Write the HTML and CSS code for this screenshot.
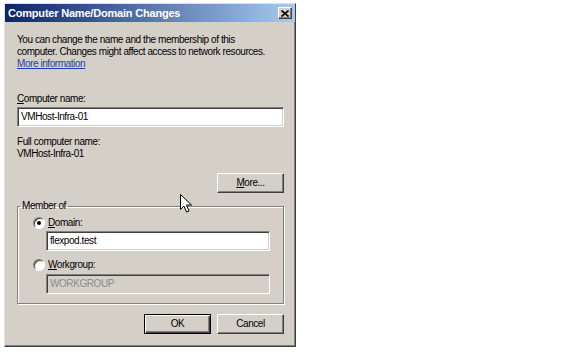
FILE: index.html
```html
<!DOCTYPE html>
<html lang="en">
<head>
    <meta charset="UTF-8">
    <title>Computer Name/Domain Changes</title>
    <link rel="stylesheet" href="styles.css">
</head>
<body>
    <div class="window">
        <div class="titlebar">
            <span class="title">Computer Name/Domain Changes</span>
            <span class="close">
                <svg width="8" height="7" viewBox="0 0 8 7"><path d="M0.5 0.5 L7.5 6.5 M7.5 0.5 L0.5 6.5" stroke="#000" stroke-width="1.6"/></svg>
            </span>
        </div>
        <div class="content">
            <p class="intro">You can change the name and the membership of this<br>computer. Changes might affect access to network resources.<br><a href="#">More information</a></p>

            <label class="label-top"><u>C</u>omputer name:</label>
            <div class="field">VMHost-Infra-01</div>

            <div class="label-top full">Full computer name:</div>
            <div class="value">VMHost-Infra-01</div>

            <div class="row-right more-row">
                <button class="btn"><u>M</u>ore...</button>
            </div>

            <fieldset class="group">
                <legend>Member of</legend>
                <div class="radio-row">
                    <span class="radio checked"></span>
                    <span><u>D</u>omain:</span>
                </div>
                <div class="field sub">flexpod.test</div>
                <div class="radio-row wg">
                    <span class="radio"></span>
                    <span><u>W</u>orkgroup:</span>
                </div>
                <div class="field sub disabled">WORKGROUP</div>
            </fieldset>

            <div class="row-right actions">
                <button class="btn default">OK</button>
                <button class="btn">Cancel</button>
            </div>
        </div>
    </div>

    <!-- mouse pointer -->
    <svg class="cursor" width="13" height="20" viewBox="0 0 13 20">
        <path d="M0.5 0.5 L0.5 15.5 L4 12 L6.5 18 L9 17 L6.5 11 L11.5 11 Z" fill="#fff" stroke="#000" stroke-width="1"/>
    </svg>
</body>
</html>
```

FILE: styles.css
```css
body {
    margin: 0;
    background: #fff;
    font-family: "Liberation Sans", Arial, sans-serif;
    font-size: 10px;
    letter-spacing: -0.43px;
    line-height: 12px;
    color: #000;
    position: relative;
    height: 353px;
}

.window {
    width: 290px;
    margin: 3px 0 0 4px;
    background: #d4d0c8;
    border: 1px solid;
    border-color: #e4e1dc #404040 #404040 #e4e1dc;
    box-shadow: inset -1px -1px #808080;
}

.titlebar {
    height: 18px;
    display: flex;
    align-items: center;
    justify-content: space-between;
    padding: 0 3px;
    background: linear-gradient(to right, #0a246a, #a6caf0);
}

.title {
    color: #fff;
    font-weight: bold;
    font-size: 11px;
    letter-spacing: -0.2px;
}

.close {
    width: 12px;
    height: 10px;
    display: flex;
    align-items: center;
    justify-content: center;
    background: #d4d0c8;
    border: 1px solid;
    border-color: #fff #404040 #404040 #fff;
    box-shadow: inset -1px -1px #808080;
}

.content {
    padding: 12px 11px 12px 12px;
}

.intro {
    margin: 0;
    white-space: nowrap;
}

.intro a {
    color: #1c3fa8;
}

.label-top {
    display: block;
    margin-top: 23px;
}

.field {
    height: 20px;
    margin-top: 2px;
    box-sizing: border-box;
    padding: 3px 0 0 3px;
    background: #fff;
    border: 1px solid;
    border-color: #808080 #fff #fff #808080;
    box-shadow: inset 1px 1px #404040, inset -1px -1px #d4d0c8;
}

.full {
    margin-top: 9px;
}

.row-right {
    display: flex;
    justify-content: flex-end;
    gap: 6px;
}

.more-row {
    margin-top: 13px;
}

.btn {
    width: 67px;
    height: 20px;
    padding: 0;
    font: inherit;
    letter-spacing: inherit;
    color: #000;
    background: #d4d0c8;
    border: 1px solid;
    border-color: #fff #404040 #404040 #fff;
    box-shadow: inset -1px -1px #808080;
}

.btn.default {
    border: 1px solid #000;
    box-shadow: inset 1px 1px #fff, inset -1px -1px #404040, inset -2px -2px #808080;
}

.group {
    margin: 7px 0 0 0;
    padding: 0 0 9px 0;
    border: 1px solid #808080;
    box-shadow: inset 1px 1px #fff, 1px 1px #fff;
}

.group legend {
    margin-left: 2px;
    padding: 0 2px;
}

.radio-row {
    display: flex;
    align-items: center;
    gap: 3px;
    margin: 5px 0 0 15px;
}

.radio-row.wg {
    margin-top: 8px;
}

.radio {
    width: 12px;
    height: 12px;
    box-sizing: border-box;
    border-radius: 50%;
    background: #fff;
    border: 1px solid;
    border-color: #808080 #fff #fff #808080;
    box-shadow: inset 1px 1px #404040;
    position: relative;
}

.radio.checked::after {
    content: "";
    position: absolute;
    left: 3px;
    top: 3px;
    width: 4px;
    height: 4px;
    border-radius: 50%;
    background: #000;
}

.field.sub {
    margin: 2px 13px 0 28px;
}

.field.sub.disabled {
    margin-top: 3px;
    background: #d4d0c8;
    color: #8a8a8a;
}

.actions {
    margin-top: 10px;
}

.cursor {
    position: absolute;
    left: 180px;
    top: 194px;
}
```
